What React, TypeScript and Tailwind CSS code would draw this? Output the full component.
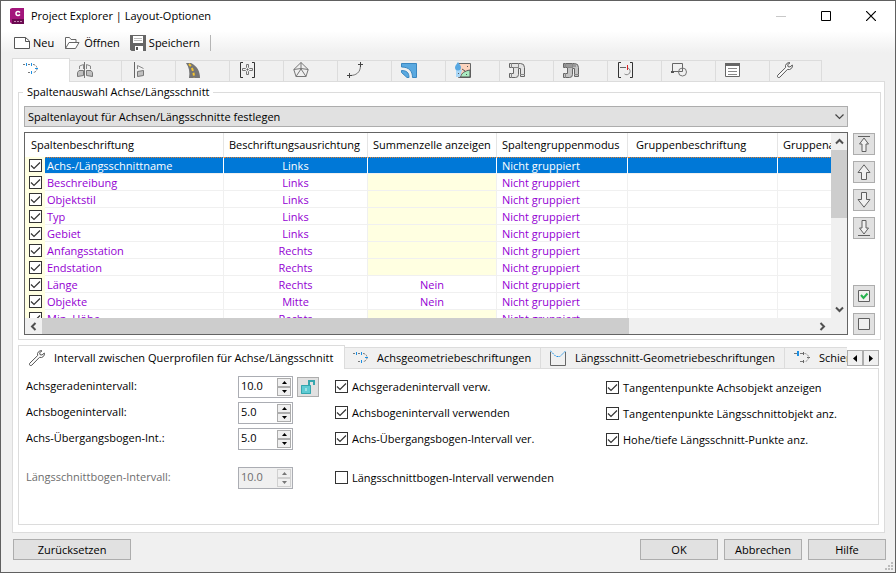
import React, { useState } from "react";

type IconProps = { className?: string };

function Icon({ children, className = "" }: { children: React.ReactNode; className?: string }) {
  return (
    <svg aria-hidden="true" viewBox="0 0 16 16" width="16" height="16" fill="none" stroke="#6b6b6b" className={`shrink-0 ${className}`}>
      {children}
    </svg>
  );
}

function AlignmentIcon({ className }: IconProps) {
  return (
    <Icon className={className}>
      <path d="M1 3.5h2M6 3.5h2M6 11.5h2" stroke="#777" />
      <path d="M11 3.5a4 4 0 0 1 0 8" stroke="#777" strokeDasharray="2 1" />
      <path d="M4.5 2v3M9.5 2v3M9.5 10v3M13 7.5h3" stroke="#1a8fe3" />
    </Icon>
  );
}

function OffsetAlignmentIcon({ className }: IconProps) {
  return (
    <Icon className={className}>
      <path d="M0 3.5h3M6 3.5h3M6 11.5h3" stroke="#777" />
      <path d="M9.5 2v3M9.5 10v3M13 7.5h3" stroke="#666" />
      <path d="M10.5 3.5a4 4 0 0 1 0 8" stroke="#888" strokeDasharray="2 1" />
      <path d="M4 1v5" stroke="#1a8fe3" strokeWidth="2" />
    </Icon>
  );
}

function MirrorIcon() {
  return (
    <Icon>
      <path d="M.5 14.5v-4L2 8.500h4.500v5zM15.500 14.500v-4L14 8.500H9.500v5z" fill="#c0c0c0" stroke="#777" />
      <path d="M2.500 7V4l4-1.500V7M13.500 7V4l-4-1.500V7" stroke="#888" />
      <path d="M7.500 0v16" stroke="#777" />
    </Icon>
  );
}

function FlagIcon() {
  return (
    <Icon>
      <path d="M3.5 0v16" stroke="#666" />
      <path d="M6.500 7V3.500l6 3" stroke="#888" />
      <path d="M6.500 9.500l6-1v5l-6 1z" fill="#c0c0c0" stroke="#777" />
    </Icon>
  );
}

function RoadIcon() {
  return (
    <Icon>
      <path d="M1 1h5c6 3 9 8 9 15H4C5 10 4 5 1 1z" fill="#757575" stroke="none" />
      <path d="M4 2c3 3 5 8 5 14" stroke="#f4c430" strokeWidth="2" strokeDasharray="3 2" />
    </Icon>
  );
}

function PointGroupIcon() {
  return (
    <Icon>
      <path d="M4 .5H1.500v15H4M13 .5h2.500v15H13" stroke="#333" />
      <path d="M7.500 2.500h2v3l1 1h3v2h-3l-1 1v3h-2v-3l-1-1h-3v-2h3l1-1z" stroke="#777" />
      <path d="M8 7h1v1H8z" stroke="#555" />
    </Icon>
  );
}

function SurfaceIcon() {
  return (
    <Icon>
      <path d="M8 .5L.8 7.5 3 14.5h10l2.200-7zM8 .5V8M.8 7.500L8 6.500l7.200 1M8 7l-5 7.500M8 7l5 7.500" stroke="#777" />
    </Icon>
  );
}

function CurveIcon() {
  return (
    <Icon>
      <path d="M3 13.500c6 0 10.500-3 10.500-10" stroke="#777" />
      <path d="M2.500 11v5M0 13.500h5M13.500 0v5M11 2.500h5" stroke="#444" />
    </Icon>
  );
}

function CorridorIcon() {
  return (
    <Icon>
      <path d="M.5 1.500h15v14h-4C11.500 9 8 5 .5 5z" fill="#5aa9e0" stroke="#3b87c0" />
      <path d="M.5 8.500c5 0 7.500 2 7.500 7H6l-5.500-5z" fill="#5aa9e0" stroke="#3b87c0" />
    </Icon>
  );
}

function CatchmentIcon() {
  return (
    <Icon>
      <path d="M3.500 1.500h12v14h-12z" fill="#fbd3bd" stroke="#666" />
      <path d="M5.500 15c1-4 4-6 9.500-7v7z" fill="#a9ebc1" stroke="#555" />
      <path d="M1 8h6l-2 7H1z" fill="#a9d7f7" stroke="none" />
      <path d="M3 0C1 3 0 4 0 5.500a3 3 0 0 0 6 0C6 4 5 3 3 0z" fill="#58a8e2" stroke="none" />
      <path d="M12.500 4v1M3.500 11v1M11.500 12v1M7 7l3 2" stroke="#555" />
    </Icon>
  );
}

function PipeIcon({ dark = false }: { dark?: boolean }) {
  return (
    <Icon>
      <path
        d="M.5 1.500h11q4 0 4 4v9h-4v-8h-2v6q0 3-3 3h-6v-4h4v-6h-4z"
        fill={dark ? "#c4c4c4" : "#e4e4e4"}
        stroke="#666"
      />
      {dark && <path d="M1 2h12v3H1z" fill="#999" stroke="none" />}
      <path d="M2.500 1v5M4.500 5.500h5M9.500 1v5M11 12.500h5M2.500 11v5" stroke="#888" />
    </Icon>
  );
}

function StationIcon() {
  return (
    <Icon>
      <path d="M4 .5H1.500v15H4M13 .5h2.500v15H13" stroke="#333" />
      <path d="M3 5.500h6" stroke="#666" />
      <path d="M11 6a3.500 3.500 0 1 1-3.500 6" stroke="#888" />
      <path d="M10.500 3v5" stroke="#dd2222" />
    </Icon>
  );
}

function ShapesIcon() {
  return (
    <Icon>
      <path d="M1.500 10V1.500h10v8H1.500z" stroke="#666" />
      <circle cx="11.5" cy="10" r="4" stroke="#777" />
      <path d="M0 9h3v2H0z" fill="#555" stroke="none" />
    </Icon>
  );
}

function ListIcon() {
  return (
    <Icon>
      <path d="M.5 1.500h14v13H.5z" fill="#fff" stroke="#666" />
      <path d="M0 1h15v3H0z" fill="#666" stroke="none" />
      <path d="M3 6.500h9M3 9.500h9M3 12.500h9" stroke="#888" />
    </Icon>
  );
}

function WrenchIcon({ className }: IconProps) {
  return (
    <Icon className={className}>
      <path
        d="M13 .8a3.600 3.600 0 0 0-4.300 4.700L.8 13.200a1.300 1.300 0 0 0 2 2l7.700-7.900A3.600 3.600 0 0 0 15.300 3L13 5l-2-.3-.3-2z"
        fill="#fff"
        stroke="#555"
      />
    </Icon>
  );
}

function ProfileIcon({ className }: IconProps) {
  return (
    <Icon className={className}>
      <path d="M.5 2v13.500h15V2" stroke="#666" />
      <path d="M0 .5l6 6h4l6-6" stroke="#1a8fe3" strokeDasharray="2 1" />
    </Icon>
  );
}

const mainTabs = [
  { label: "Querprofile", icon: <MirrorIcon /> },
  { label: "Querprofillinien", icon: <FlagIcon /> },
  { label: "Straße", icon: <RoadIcon /> },
  { label: "Punktgruppen", icon: <PointGroupIcon /> },
  { label: "Oberflächen", icon: <SurfaceIcon /> },
  { label: "Elementkanten", icon: <CurveIcon /> },
  { label: "3D-Profilkörper", icon: <CorridorIcon /> },
  { label: "Einzugsgebiete", icon: <CatchmentIcon /> },
  { label: "Kanalnetze", icon: <PipeIcon /> },
  { label: "Druckleitungsnetze", icon: <PipeIcon dark /> },
  { label: "Stationen", icon: <StationIcon /> },
  { label: "Formen", icon: <ShapesIcon /> },
  { label: "Berichte", icon: <ListIcon /> },
  { label: "Einstellungen", icon: <WrenchIcon /> },
];

type Row = { name: string; align: string; sum: string };

const rows: Row[] = [
  { name: "Achs-/Längsschnittname", align: "Links", sum: "" },
  { name: "Beschreibung", align: "Links", sum: "" },
  { name: "Objektstil", align: "Links", sum: "" },
  { name: "Typ", align: "Links", sum: "" },
  { name: "Gebiet", align: "Links", sum: "" },
  { name: "Anfangsstation", align: "Rechts", sum: "" },
  { name: "Endstation", align: "Rechts", sum: "" },
  { name: "Länge", align: "Rechts", sum: "Nein" },
  { name: "Objekte", align: "Mitte", sum: "Nein" },
  { name: "Min. Höhe", align: "Rechts", sum: "" },
];

function CheckBox({ id, label, defaultChecked = true }: { id: string; label?: string; defaultChecked?: boolean }) {
  return (
    <span className="relative inline-flex h-[13px] w-[13px] shrink-0">
      <input
        id={id}
        type="checkbox"
        aria-label={label}
        defaultChecked={defaultChecked}
        className="peer h-[13px] w-[13px] appearance-none border border-[#333] bg-white"
      />
      <svg
        aria-hidden="true"
        viewBox="0 0 13 13"
        className="pointer-events-none absolute inset-0 hidden peer-checked:block"
        fill="none"
        stroke="#333"
        strokeWidth="1.2"
      >
        <path d="M2 6.500l3 3 6-6" />
      </svg>
    </span>
  );
}

function CheckRow({ id, text, defaultChecked = true, className = "" }: { id: string; text: string; defaultChecked?: boolean; className?: string }) {
  return (
    <div className={`flex h-[21px] items-center gap-1 ${className}`}>
      <CheckBox id={id} defaultChecked={defaultChecked} />
      <label htmlFor={id} className="whitespace-nowrap">
        {text}
      </label>
    </div>
  );
}

function IntervalField({
  id,
  label,
  initial,
  disabled = false,
  className = "",
  children,
}: {
  id: string;
  label: string;
  initial: number;
  disabled?: boolean;
  className?: string;
  children?: React.ReactNode;
}) {
  const [value, setValue] = useState(initial.toFixed(1));

  const step = (delta: number) => {
    const next = Math.max(0, (parseFloat(value) || 0) + delta);
    setValue(next.toFixed(1));
  };

  return (
    <div className={`flex h-[22px] items-center ${disabled ? "text-[#6d6d6d]" : ""} ${className}`}>
      <label htmlFor={id} className="w-[212px] pb-[2px] whitespace-nowrap">
        {label}
      </label>
      <div className={`flex h-[22px] w-[55px] border border-[#abadb3] p-px ${disabled ? "bg-[#f0f0f0]" : "bg-white"}`}>
        <input
          id={id}
          type="text"
          value={value}
          disabled={disabled}
          onChange={(e) => setValue(e.target.value)}
          className="h-4 w-full min-w-0 bg-transparent pl-px"
        />
        <div className="flex w-[14px] shrink-0 flex-col">
          {[1, -1].map((d) => (
            <button
              key={d}
              type="button"
              disabled={disabled}
              aria-label={d > 0 ? "Erhöhen" : "Verringern"}
              onClick={() => step(d)}
              className={`flex flex-1 items-center justify-center border bg-[#f0f0f0] ${disabled ? "border-[#d0d0d0]" : "border-[#acacac]"}`}
            >
              <svg aria-hidden="true" width="5" height="3" viewBox="0 0 5 3" fill={disabled ? "#777" : "#000"}>
                <path d={d > 0 ? "M0 3h5L2.500 0z" : "M0 0h5L2.500 3z"} />
              </svg>
            </button>
          ))}
        </div>
      </div>
      {children}
    </div>
  );
}

function Chevron({ d }: { d: string }) {
  return (
    <svg aria-hidden="true" width="9" height="9" viewBox="0 0 9 9" fill="none" stroke="#505050" strokeWidth="2">
      <path d={d} />
    </svg>
  );
}

function SideButton({ label, children, className = "" }: { label: string; children: React.ReactNode; className?: string }) {
  return (
    <button
      type="button"
      aria-label={label}
      className={`flex h-[22px] w-[22px] items-center justify-center border border-[#adadad] bg-[#e1e1e1] ${className}`}
    >
      {children}
    </button>
  );
}

function ColumnTable() {
  const [selected, setSelected] = useState(0);
  const th = "border-r border-[#e5e5e5] px-[5px] text-left font-normal whitespace-nowrap";

  return (
    <div className="flex h-[203px] min-w-0 flex-1 flex-col border border-[#646464] bg-white">
      <div className="flex min-h-0 flex-1">
        <div className="min-w-0 flex-1 overflow-hidden">
          <table className="w-full min-w-[903px] table-fixed border-separate border-spacing-0">
            <colgroup>
              <col className="w-[20px]" />
              <col className="w-[179px]" />
              <col className="w-[144px]" />
              <col className="w-[129px]" />
              <col className="w-[131px]" />
              <col className="w-[150px]" />
              <col />
            </colgroup>
            <thead>
              <tr className="h-6">
                <th colSpan={2} className={`${th} pl-[6px]`}>Spaltenbeschriftung</th>
                <th className={th}>Beschriftungsausrichtung</th>
                <th className={th}>Summenzelle anzeigen</th>
                <th className={th}>Spaltengruppenmodus</th>
                <th className={`${th} pl-[8px]`}>Gruppenbeschriftung</th>
                <th className={th}>Gruppenausrichtung</th>
              </tr>
            </thead>
            <tbody>
              {rows.map((row, i) => {
                const on = i === selected;
                const td = on
                  ? "border-t border-r border-b border-t-[#e08030] border-r-white border-b-[#f0f0f0] [border-top-style:dotted] bg-[#0078d7] text-white"
                  : "border-r border-b border-[#f0f0f0] text-[#9400d3]";
                return (
                  <tr key={row.name} onClick={() => setSelected(i)} className="h-[17px] leading-[15px]">
                    <td className="bg-[#ffffe1] pl-1 align-middle">
                      <span className="flex">
                        <CheckBox id={`col-${i}`} label={row.name} />
                      </span>
                    </td>
                    <td className={`${td} pl-[2px] whitespace-nowrap`}>{row.name}</td>
                    <td className={`${td} text-center`}>{row.align}</td>
                    <td className={`${td} text-center ${!on && !row.sum ? "bg-[#ffffe1]" : ""}`}>{row.sum}</td>
                    <td className={`${td} pl-[5px] whitespace-nowrap`}>Nicht gruppiert</td>
                    <td className={td} />
                    <td className={td} />
                  </tr>
                );
              })}
            </tbody>
          </table>
        </div>
        <div className="flex w-4 shrink-0 flex-col bg-[#f0f0f0]">
          <button type="button" aria-label="Nach oben blättern" className="flex h-[17px] items-center justify-center">
            <Chevron d="M1 6.500L4.500 3 8 6.500" />
          </button>
          <div className="min-h-0 flex-1">
            <div className="h-[45%] bg-[#cdcdcd]" />
          </div>
          <button type="button" aria-label="Nach unten blättern" className="flex h-[17px] items-center justify-center">
            <Chevron d="M1 2.500L4.500 6 8 2.500" />
          </button>
        </div>
      </div>
      <div className="flex h-4 shrink-0 bg-[#f0f0f0] pr-4">
        <button type="button" aria-label="Nach links blättern" className="flex w-[17px] items-center justify-center">
          <Chevron d="M6.500 1L3 4.500 6.500 8" />
        </button>
        <div className="flex-1">
          <div className="h-full w-[76%] bg-[#cdcdcd]" />
        </div>
        <button type="button" aria-label="Nach rechts blättern" className="flex w-[17px] items-center justify-center">
          <Chevron d="M2.500 1L6 4.500 2.500 8" />
        </button>
      </div>
    </div>
  );
}

export default function App() {
  const dialogButton = "h-[21px] border border-[#adadad] bg-[#e1e1e1]";
  const subTab = "flex h-[22px] shrink-0 items-center border-t border-r border-b border-[#dcdcdc] bg-[#f0f0f0] whitespace-nowrap";

  return (
    <div className="flex min-h-screen flex-col border border-[#606060] bg-[#f0f0f0] font-['Open_Sans',sans-serif] text-[11px] leading-4 text-black">
      <header className="flex h-[30px] items-center bg-white pl-2">
        <svg aria-hidden="true" width="16" height="16" viewBox="0 0 16 16">
          <path d="M1 2l3-1.500v15L1 14z" fill="#d0409a" />
          <path d="M3 0h12v16H3L1 14V1z" fill="#a3157c" />
          <path d="M3 11h12v5H3z" fill="#6a0a50" />
          <path d="M11 4.500q-1-1-2-1-2 0-2 2t2 2q1 0 2-1" fill="none" stroke="#fff" strokeWidth="1.5" />
          <path d="M5 13.500h8" stroke="#c58ab4" strokeDasharray="2 1" />
        </svg>
        <h1 className="ml-[6px]">Project Explorer | Layout-Optionen</h1>
        <div className="ml-auto flex pr-[2px]">
          <button type="button" aria-label="Minimieren" disabled className="flex w-[45px] justify-center">
            <svg aria-hidden="true" width="10" height="10" stroke="#c8c8c8"><path d="M0 5.500h10" /></svg>
          </button>
          <button type="button" aria-label="Maximieren" className="flex w-[45px] justify-center">
            <svg aria-hidden="true" width="10" height="10" fill="none" stroke="#000"><path d="M.5.5h9v9h-9z" /></svg>
          </button>
          <button type="button" aria-label="Schließen" className="flex w-[45px] justify-center">
            <svg aria-hidden="true" width="10" height="10" stroke="#000" strokeWidth="1.2"><path d="M0 0l10 10M10 0L0 10" /></svg>
          </button>
        </div>
      </header>

      <div className="flex h-[27px] items-start gap-[10px] bg-linear-to-b from-white to-[#f0f0f0] to-80% pt-1 pl-[13px]">
        <button type="button" className="flex items-center gap-[3px]">
          <Icon>
            <path d="M.5 2.500h11l4 3.500v7.500H.5z" fill="#fff" stroke="#555" />
            <path d="M11.500 2.500v4h4" stroke="#555" />
          </Icon>
          Neu
        </button>
        <button type="button" className="flex items-center gap-1">
          <Icon>
            <path d="M1.500 13.500v-11h4l1.500 2h5v3M1.500 13.500l3.500-6h10l-3.500 6z" fill="#fff" stroke="#666" />
          </Icon>
          Öffnen
        </button>
        <button type="button" className="flex items-center gap-[3px]">
          <Icon>
            <path d="M0 0h16v16H1.500L0 14.500z" fill="#666" stroke="none" />
            <path d="M3 1h10v7H3zM5 11h8v5H5z" fill="#fff" stroke="none" />
            <path d="M4 3.500h8M4 5.500h8" stroke="#bbb" />
            <path d="M7 12v3" stroke="#555" strokeWidth="2" />
          </Icon>
          Speichern
        </button>
        <span className="h-4 w-px bg-[#b5b5b5]" />
      </div>

      <main className="flex flex-1 flex-col pr-[10px] pl-[11px]">
        <div role="tablist" className="relative z-10 -mb-px flex items-end">
          <button
            type="button"
            role="tab"
            aria-selected="true"
            aria-label="Achse/Längsschnitt"
            className="flex h-6 w-[58px] items-start border border-b-0 border-[#dcdcdc] bg-white pt-[2px] pl-[9px]"
          >
            <AlignmentIcon />
          </button>
          {mainTabs.map((tab, i) => (
            <button
              key={tab.label}
              type="button"
              role="tab"
              aria-selected="false"
              aria-label={tab.label}
              title={tab.label}
              className={`flex h-[22px] items-start border-t border-r border-b border-[#dcdcdc] bg-[#f0f0f0] pt-px ${
                i === 0 || i === mainTabs.length - 1 ? "w-[52px] pl-[7px]" : "w-[54px] pl-[9px]"
              }`}
            >
              {tab.icon}
            </button>
          ))}
        </div>

        <section className="flex flex-1 flex-col border border-[#dcdcdc] bg-white px-[5px] pt-[2px] pb-[7px]">
          <fieldset className="mr-[-2px] min-w-0 border border-[#dcdcdc] px-[5px] pb-1">
            <legend className="ml-[-1px] px-1">Spaltenauswahl Achse/Längsschnitt</legend>
            <div className="relative mt-[6px] mr-[27px]">
              <select
                aria-label="Spaltenlayout"
                className="h-[21px] w-full appearance-none border border-[#adadad] bg-[#e1e1e1] pl-[3px]"
              >
                <option>Spaltenlayout für Achsen/Längsschnitte festlegen</option>
              </select>
              <svg aria-hidden="true" width="9" height="6" fill="none" stroke="#444" strokeWidth="1.2" className="pointer-events-none absolute top-2 right-1">
                <path d="M.5.5l4 4 4-4" />
              </svg>
            </div>
            <div className="mt-[5px] flex">
              <ColumnTable />
              <div className="ml-[5px] flex flex-col gap-[6px] pt-px">
                <SideButton label="An den Anfang">
                  <svg aria-hidden="true" width="14" height="16" fill="#f0f0f0" stroke="#606060">
                    <path d="M1 .5h12M7 2L2.500 8H5v7.500h4V8h2.500z" />
                  </svg>
                </SideButton>
                <SideButton label="Nach oben">
                  <svg aria-hidden="true" width="14" height="16" fill="#f0f0f0" stroke="#606060">
                    <path d="M7 .8L1 8.500h3.500v7h5v-7H13z" />
                  </svg>
                </SideButton>
                <SideButton label="Nach unten">
                  <svg aria-hidden="true" width="14" height="16" fill="#f0f0f0" stroke="#606060">
                    <path d="M7 15.200L1 7.500h3.500v-7h5v7H13z" />
                  </svg>
                </SideButton>
                <SideButton label="An das Ende">
                  <svg aria-hidden="true" width="14" height="16" fill="#f0f0f0" stroke="#606060">
                    <path d="M1 15.500h12M7 14L2.500 8H5V.5h4V8h2.500z" />
                  </svg>
                </SideButton>
                <SideButton label="Alle auswählen" className="mt-auto">
                  <svg aria-hidden="true" width="12" height="12" fill="#f0f0f0">
                    <path d="M.5.5h11v11H.5z" stroke="#606060" />
                    <path d="M3 5l2.500 3L9.500 3.500" fill="none" stroke="#27b34f" strokeWidth="2" />
                  </svg>
                </SideButton>
                <SideButton label="Keine auswählen">
                  <svg aria-hidden="true" width="12" height="12" fill="#f0f0f0" stroke="#606060">
                    <path d="M.5.5h11v11H.5z" />
                  </svg>
                </SideButton>
              </div>
            </div>
          </fieldset>

          <div className="relative z-10 mt-[5px] -mb-px flex items-end">
            <div role="tablist" className="flex min-w-0 flex-1 items-end overflow-hidden">
              <button
                type="button"
                role="tab"
                aria-selected="true"
                className="flex h-6 w-[327px] shrink-0 items-center border border-b-0 border-[#dcdcdc] bg-white pl-[10px] whitespace-nowrap"
              >
                <WrenchIcon className="mr-[9px]" />
                Intervall zwischen Querprofilen für Achse/Längsschnitt
              </button>
              <button type="button" role="tab" aria-selected="false" className={`${subTab} w-[196px] pl-[7px]`}>
                <AlignmentIcon className="mr-[9px]" />
                Achsgeometriebeschriftungen
              </button>
              <button type="button" role="tab" aria-selected="false" className={`${subTab} w-[244px] pl-[9px]`}>
                <ProfileIcon className="mr-[9px]" />
                Längsschnitt-Geometriebeschriftungen
              </button>
              <button type="button" role="tab" aria-selected="false" className={`${subTab} w-[150px] pl-[9px]`}>
                <OffsetAlignmentIcon className="mr-[9px]" />
                Schienenbeschriftungen
              </button>
            </div>
            <div className="mb-[3px] flex">
              <button type="button" aria-label="Vorherige Registerkarte" className="flex h-4 w-4 items-center justify-center border border-[#adadad] bg-[#f0f0f0]">
                <svg aria-hidden="true" width="4" height="7"><path d="M4 0v7L0 3.500z" /></svg>
              </button>
              <button type="button" aria-label="Nächste Registerkarte" className="flex h-4 w-4 items-center justify-center border border-[#adadad] bg-[#f0f0f0]">
                <svg aria-hidden="true" width="4" height="7"><path d="M0 0v7l4-3.500z" /></svg>
              </button>
            </div>
          </div>

          <div className="flex flex-1 border border-[#dcdcdc] px-[7px] pt-[7px] pb-[35px]">
            <div className="flex w-[309px] shrink-0 flex-col gap-1">
              <IntervalField id="tangent" label="Achsgeradenintervall:" initial={10}>
                <button type="button" aria-label="Entsperren" className="ml-1 flex h-5 w-[22px] items-center justify-center border border-[#adadad] bg-[#e1e1e1]">
                  <Icon>
                    <path d="M1 6h10v9H1z" fill="#5ecbd3" stroke="none" />
                    <path d="M1.500 6.500h9v8h-9z" stroke="#35a5ad" />
                    <path d="M9 6V2h5v4" stroke="#35a5ad" strokeWidth="2" />
                    <path d="M6 9v3" stroke="#d8f6f8" />
                  </Icon>
                </button>
              </IntervalField>
              <IntervalField id="curve" label="Achsbogenintervall:" initial={5} />
              <IntervalField id="spiral" label="Achs-Übergangsbogen-Int.:" initial={5} />
              <IntervalField id="profile" label="Längsschnittbogen-Intervall:" initial={10} disabled className="mt-[13px]" />
            </div>
            <div className="flex w-[271px] shrink-0 flex-col gap-[5px]">
              <CheckRow id="use-tangent" text="Achsgeradenintervall verw." />
              <CheckRow id="use-curve" text="Achsbogenintervall verwenden" />
              <CheckRow id="use-spiral" text="Achs-Übergangsbogen-Intervall ver." />
              <CheckRow id="use-profile" text="Längsschnittbogen-Intervall verwenden" defaultChecked={false} className="mt-[13px]" />
            </div>
            <div className="flex flex-col gap-[5px] pt-px">
              <CheckRow id="show-axis" text="Tangentenpunkte Achsobjekt anzeigen" />
              <CheckRow id="show-profile" text="Tangentenpunkte Längsschnittobjekt anz." />
              <CheckRow id="show-highlow" text="Hohe/tiefe Längsschnitt-Punkte anz." />
            </div>
          </div>
        </section>
      </main>

      <footer className="relative flex gap-[6px] pt-[6px] pr-[9px] pb-3 pl-3">
        <button type="button" className={`${dialogButton} mr-auto w-[118px]`}>Zurücksetzen</button>
        <button type="button" className={`${dialogButton} w-[78px]`}>OK</button>
        <button type="button" className={`${dialogButton} w-[78px]`}>Abbrechen</button>
        <button type="button" className={`${dialogButton} w-[78px]`}>Hilfe</button>
        <svg aria-hidden="true" width="8" height="8" fill="#bcbcbc" className="absolute right-[2px] bottom-[2px]">
          <path d="M6 0h2v2H6zM3 3h2v2H3zM6 3h2v2H6zM0 6h2v2H0zM3 6h2v2H3zM6 6h2v2H6z" />
        </svg>
      </footer>
    </div>
  );
}
